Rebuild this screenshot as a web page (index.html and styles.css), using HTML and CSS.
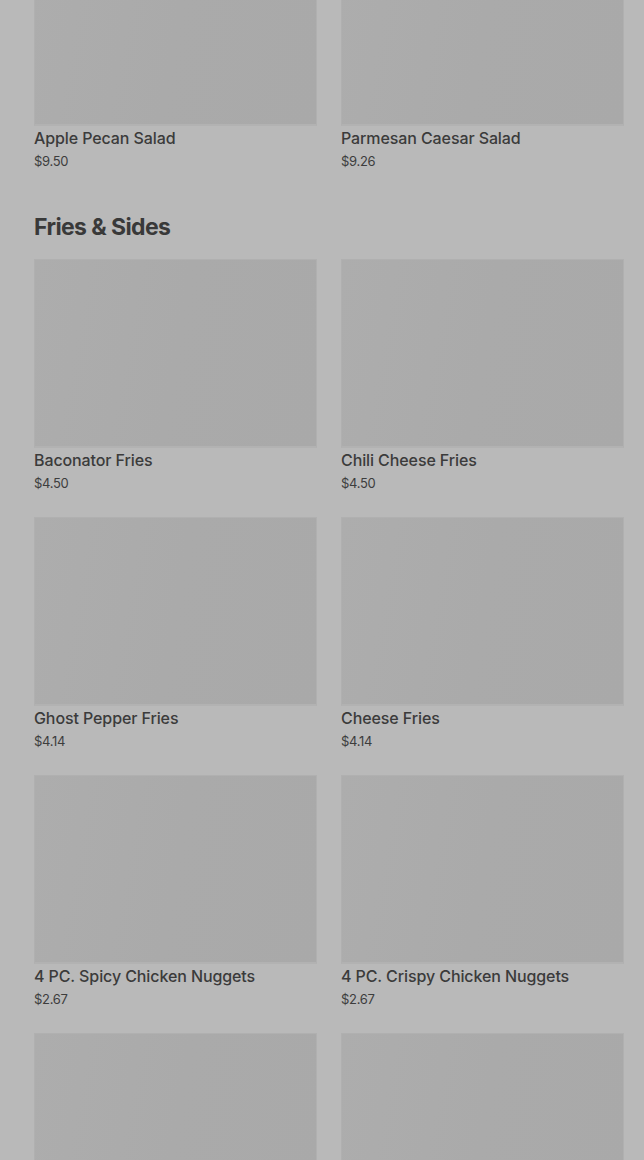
FILE: index.html
```html
<!DOCTYPE html>
<html>
<head>
<meta charset="utf-8">
<link rel="stylesheet" href="styles.css">
</head>
<body>
<main class="menu">
  <section class="section section-partial">
    <div class="grid">
      <div class="card"><div class="thumb"></div><div class="name">Apple Pecan Salad</div><div class="price">$9.50</div></div>
      <div class="card"><div class="thumb"></div><div class="name">Parmesan Caesar Salad</div><div class="price">$9.26</div></div>
    </div>
  </section>
  <section class="section">
    <h2 class="heading">Fries &amp; Sides</h2>
    <div class="grid">
      <div class="card"><div class="thumb"></div><div class="name">Baconator Fries</div><div class="price">$4.50</div></div>
      <div class="card"><div class="thumb"></div><div class="name">Chili Cheese Fries</div><div class="price">$4.50</div></div>
      <div class="card"><div class="thumb"></div><div class="name">Ghost Pepper Fries</div><div class="price">$4.14</div></div>
      <div class="card"><div class="thumb"></div><div class="name">Cheese Fries</div><div class="price">$4.14</div></div>
      <div class="card"><div class="thumb"></div><div class="name">4 PC. Spicy Chicken Nuggets</div><div class="price">$2.67</div></div>
      <div class="card"><div class="thumb"></div><div class="name">4 PC. Crispy Chicken Nuggets</div><div class="price">$2.67</div></div>
      <div class="card"><div class="thumb"></div></div>
      <div class="card"><div class="thumb"></div></div>
    </div>
  </section>
</main>
</body>
</html>
```
FILE: styles.css
```css
html, body {
  margin: 0;
  padding: 0;
  background: #b9b9b9;
  overflow: hidden;
}
body {
  font-family: Inter, "Noto Sans", "Liberation Sans", sans-serif;
  color: #3b3b3b;
}
.menu {
  padding: 0 20px 0 34px;
  margin-top: -63px;
}
.section + .section {
  margin-top: 41px;
}
.heading {
  margin: 0 0 16px;
  font-size: 23px;
  line-height: 32px;
  font-weight: 700;
  letter-spacing: -0.6px;
  color: #393939;
}
.grid {
  display: grid;
  grid-template-columns: 283px 283px;
  column-gap: 24px;
  row-gap: 25px;
}
.card {
  display: flex;
  flex-direction: column;
}
.thumb {
  height: 186px;
  background: linear-gradient(100deg, #adadad 0%, #aaaaaa 50%, #a9a9a9 100%);
  border: 1px solid #b0b0b0;
  border-bottom: 2px solid #b2b2b2;
}
.name {
  margin-top: 2px;
  font-size: 16px;
  line-height: 20px;
  font-weight: 500;
  letter-spacing: -0.1px;
  color: #3b3b3b;
}
.price {
  margin-top: 4px;
  font-size: 13px;
  line-height: 18px;
  color: #3d3d3d;
  letter-spacing: -0.3px;
}
```
